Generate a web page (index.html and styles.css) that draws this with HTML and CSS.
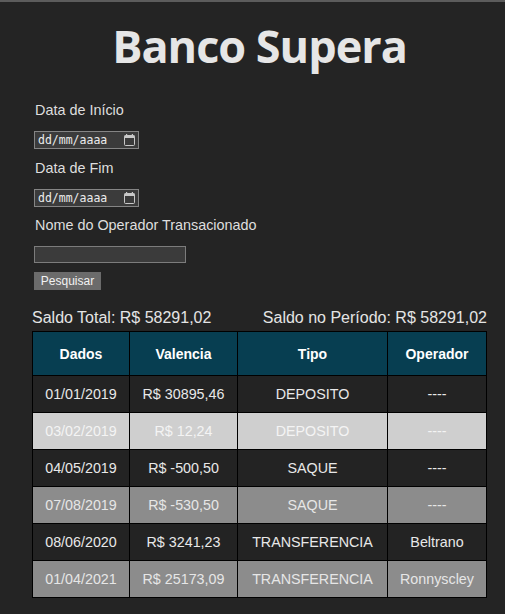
FILE: index.html
```html
<!DOCTYPE html>
<html lang="pt-BR">
<head>
<meta charset="utf-8">
<title>Banco Supera</title>
<link rel="stylesheet" href="styles.css">
</head>
<body>
<div class="page">
  <h1 class="title">Banco Supera</h1>
  <form class="filters">
    <label class="field-label">Data de Início</label>
    <div class="date-field"><span class="date-text">dd/mm/aaaa</span><svg class="cal" width="11" height="12" viewBox="0 0 11 12"><rect x="0.5" y="1.5" width="10" height="10" rx="1" fill="none" stroke="#c8c8c8" stroke-width="1"/><rect x="0.5" y="1.5" width="10" height="2.5" fill="#c8c8c8"/><rect x="2" y="0" width="1.2" height="2" fill="#c8c8c8"/><rect x="7.8" y="0" width="1.2" height="2" fill="#c8c8c8"/></svg></div>
    <label class="field-label gap-s">Data de Fim</label>
    <div class="date-field"><span class="date-text">dd/mm/aaaa</span><svg class="cal" width="11" height="12" viewBox="0 0 11 12"><rect x="0.5" y="1.5" width="10" height="10" rx="1" fill="none" stroke="#c8c8c8" stroke-width="1"/><rect x="0.5" y="1.5" width="10" height="2.5" fill="#c8c8c8"/><rect x="2" y="0" width="1.2" height="2" fill="#c8c8c8"/><rect x="7.8" y="0" width="1.2" height="2" fill="#c8c8c8"/></svg></div>
    <label class="field-label gap-xs">Nome do Operador Transacionado</label>
    <input class="text-field" type="text">
    <button class="btn" type="button">Pesquisar</button>
  </form>
  <div class="balances">
    <span>Saldo Total: R$ 58291,02</span>
    <span>Saldo no Período: R$ 58291,02</span>
  </div>
  <table class="tx">
    <thead>
      <tr>
        <th class="c-date">Dados</th>
        <th class="c-val">Valencia</th>
        <th class="c-type">Tipo</th>
        <th class="c-op">Operador</th>
      </tr>
    </thead>
    <tbody>
      <tr class="row-dark"><td>01/01/2019</td><td>R$ 30895,46</td><td>DEPOSITO</td><td>----</td></tr>
      <tr class="row-light"><td>03/02/2019</td><td>R$ 12,24</td><td>DEPOSITO</td><td>----</td></tr>
      <tr class="row-dark"><td>04/05/2019</td><td>R$ -500,50</td><td>SAQUE</td><td>----</td></tr>
      <tr class="row-mid"><td>07/08/2019</td><td>R$ -530,50</td><td>SAQUE</td><td>----</td></tr>
      <tr class="row-dark"><td>08/06/2020</td><td>R$ 3241,23</td><td>TRANSFERENCIA</td><td>Beltrano</td></tr>
      <tr class="row-mid"><td>01/04/2021</td><td>R$ 25173,09</td><td>TRANSFERENCIA</td><td>Ronnyscley</td></tr>
    </tbody>
  </table>
</div>
</body>
</html>
```
FILE: styles.css
```css
html, body {
  margin: 0;
  padding: 0;
  background: #242424;
}
body {
  border-top: 2px solid #5c5c5c;
  font-family: "Liberation Sans", Arial, sans-serif;
  color: #e4e4e4;
  min-height: 612px;
}
.page {
  padding: 0 18px 0 32px;
}
.title {
  margin: 13px 0 0 0;
  font-family: "Open Sans", "Noto Sans", sans-serif;
  font-weight: 700;
  font-size: 45px;
  letter-spacing: -1px;
  line-height: 62px;
  text-align: center;
  color: #e6e6e6;
}
.filters {
  display: flex;
  flex-direction: column;
  align-items: flex-start;
  margin-top: 25px;
  padding-left: 2px;
}
.field-label {
  display: block;
  font-size: 14.4px;
  line-height: 16px;
  margin: 0 0 13px 1px;
  color: #dedede;
}
.gap-s { margin-top: 11px; }
.gap-xs { margin-top: 10px; }
.date-field {
  box-sizing: border-box;
  width: 105px;
  height: 18px;
  border: 1px solid #858585;
  background: #3b3b3b;
  display: flex;
  align-items: center;
  justify-content: space-between;
  padding: 0 3px 0 3px;
}
.date-text {
  font-family: "DejaVu Sans Mono", "Liberation Mono", monospace;
  font-size: 11.5px;
  color: #ececec;
}
.cal {
  display: block;
}
.text-field {
  box-sizing: border-box;
  width: 152px;
  height: 17px;
  margin: 0;
  padding: 0;
  border: 1px solid #7c7c7c;
  background: #3b3b3b;
  color: #e8e8e8;
  outline: none;
}
.btn {
  box-sizing: border-box;
  margin: 9px 0 0 0;
  height: 18px;
  width: 67px;
  padding: 0;
  border: none;
  background: #6b6b6b;
  color: #f2f2f2;
  font-family: "Liberation Sans", Arial, sans-serif;
  font-size: 12px;
  line-height: 18px;
}
.balances {
  display: flex;
  justify-content: space-between;
  margin-top: 19px;
  font-size: 16px;
  line-height: 18px;
  color: #e4e4e4;
}
.tx {
  margin-top: 4px;
  width: 455px;
  table-layout: fixed;
  border-collapse: collapse;
  border: 1px solid #000;
  font-size: 14.3px;
}
.tx th, .tx td {
  border: 1px solid #000;
  text-align: center;
  vertical-align: middle;
  padding: 0;
}
.tx th {
  height: 43px;
  background: #073e51;
  color: #ffffff;
  font-weight: 700;
  font-size: 14px;
}
.tx td {
  height: 36px;
}
.c-date { width: 96px; }
.c-val { width: 107px; }
.c-type { width: 149px; }
.c-op { width: 98px; }
.row-dark td { background: #232323; color: #e8e8e8; }
.row-light td { background: #cfcfcf; color: #f4f4f4; }
.row-mid td { background: #8c8c8c; color: #e6e6e6; }
```
